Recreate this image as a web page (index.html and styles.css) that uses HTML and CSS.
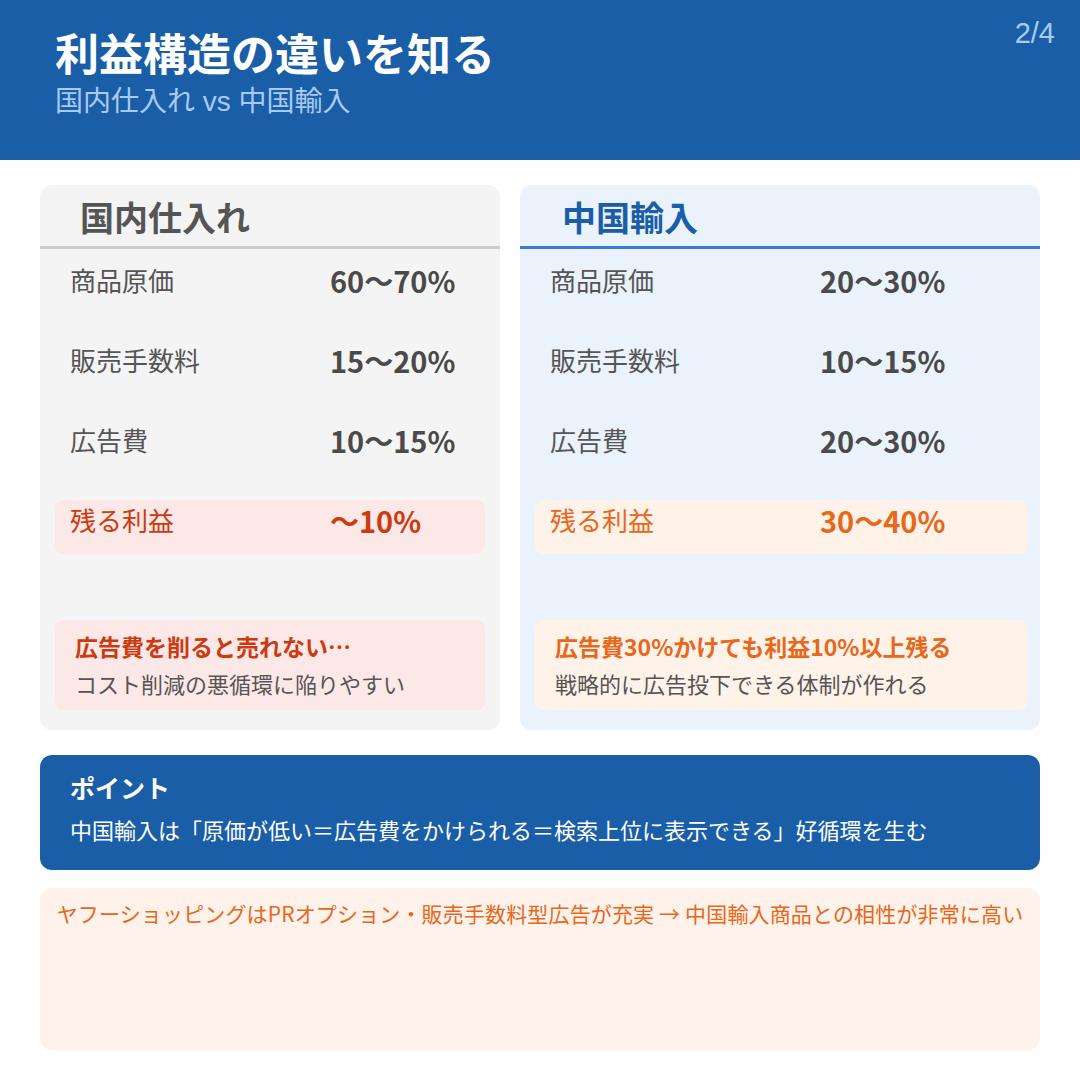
FILE: index.html
```html
<!DOCTYPE html>
<html lang="ja">
<head>
<meta charset="utf-8">
<link rel="stylesheet" href="styles.css">
</head>
<body>
<div class="page">
  <header class="header">
    <h1 class="title">利益構造の違いを知る</h1>
    <p class="subtitle">国内仕入れ vs 中国輸入</p>
    <span class="pager">2/4</span>
  </header>

  <main class="main">
    <section class="compare">
      <div class="card card-domestic">
        <h2 class="card-title">国内仕入れ</h2>
        <div class="rows">
          <div class="row"><span class="label">商品原価</span><span class="value">60〜70%</span></div>
          <div class="row"><span class="label">販売手数料</span><span class="value">15〜20%</span></div>
          <div class="row"><span class="label">広告費</span><span class="value">10〜15%</span></div>
          <div class="row profit"><span class="label">残る利益</span><span class="value">〜10%</span></div>
        </div>
        <div class="note">
          <p class="note-head">広告費を削ると売れない…</p>
          <p class="note-body">コスト削減の悪循環に陥りやすい</p>
        </div>
      </div>

      <div class="card card-china">
        <h2 class="card-title">中国輸入</h2>
        <div class="rows">
          <div class="row"><span class="label">商品原価</span><span class="value">20〜30%</span></div>
          <div class="row"><span class="label">販売手数料</span><span class="value">10〜15%</span></div>
          <div class="row"><span class="label">広告費</span><span class="value">20〜30%</span></div>
          <div class="row profit"><span class="label">残る利益</span><span class="value">30〜40%</span></div>
        </div>
        <div class="note">
          <p class="note-head">広告費30%かけても利益10%以上残る</p>
          <p class="note-body">戦略的に広告投下できる体制が作れる</p>
        </div>
      </div>
    </section>

    <section class="point">
      <h3 class="point-title">ポイント</h3>
      <p class="point-text">中国輸入は「原価が低い＝広告費をかけられる＝検索上位に表示できる」好循環を生む</p>
    </section>

    <section class="footnote">
      <p>ヤフーショッピングはPRオプション・販売手数料型広告が充実 → 中国輸入商品との相性が非常に高い</p>
    </section>
  </main>
</div>
</body>
</html>
```

FILE: styles.css
```css
* { box-sizing: border-box; margin: 0; padding: 0; }

html, body {
  width: 1080px;
  height: 1080px;
  background: #ffffff;
  font-family: "Noto Sans CJK JP", "Noto Sans", sans-serif;
  overflow: hidden;
}

.page {
  width: 1080px;
  height: 1080px;
  display: flex;
  flex-direction: column;
}

/* Header */
.header {
  position: relative;
  height: 160px;
  background: #1b5ea8;
  padding: 26px 55px 0;
}

.title {
  font-size: 44px;
  font-weight: 700;
  line-height: 53px;
  color: #ffffff;
}

.subtitle {
  margin-top: 5px;
  font-family: "Liberation Sans", "Noto Sans CJK JP", sans-serif;
  font-size: 28px;
  line-height: 36px;
  color: #a9cbf2;
}

.pager {
  position: absolute;
  top: 16px;
  right: 25px;
  font-family: "Liberation Sans", "Noto Sans CJK JP", sans-serif;
  font-size: 29px;
  line-height: 34px;
  color: #a9cbf2;
}

/* Main */
.main {
  flex: 1;
  padding: 25px 40px 30px;
  display: flex;
  flex-direction: column;
}

.compare {
  display: flex;
  gap: 20px;
  height: 545px;
}

.card {
  border-radius: 12px;
  display: flex;
  flex-direction: column;
  padding-bottom: 20px;
}

.card-domestic { width: 460px; background: #f4f4f4; }
.card-china { width: 520px; background: #eaf2fc; }

.card-title {
  height: 64px;
  padding: 11px 40px 0;
  font-size: 34px;
  line-height: 42px;
  font-weight: 700;
  border-bottom: 3px solid #cccccc;
}

.card-domestic .card-title { color: #555555; }
.card-china .card-title { color: #1b5ea8; border-bottom-color: #3a7bd5; padding-left: 42px; }

.rows {
  padding: 11px 15px 0;
}

.row {
  display: flex;
  align-items: center;
  height: 40px;
  margin-bottom: 40px;
  padding-left: 15px;
}

.row:last-child { margin-bottom: 0; }

.label {
  font-size: 26px;
  line-height: 40px;
  color: #555555;
}

.card-domestic .label { width: 260px; }
.card-china .label { width: 270px; }

.value {
  font-size: 29px;
  font-weight: 700;
  line-height: 40px;
  color: #4a4a4a;
}

.row.profit {
  height: 54px;
  margin-top: 2px;
  align-items: flex-start;
  border-radius: 8px;
}

.card-domestic .profit { background: #fde8e8; }
.card-china .profit { background: #fff2e9; margin-right: -2px; }

.card-domestic .profit .label,
.card-domestic .profit .value { color: #cc3a10; }
.card-china .profit .label,
.card-china .profit .value { color: #e8671a; }

.note {
  margin: auto 15px 0;
  padding: 11px 20px;
  border-radius: 8px;
}

.card-domestic .note { background: #fde8e8; }
.card-china .note { background: #fff2e9; margin-right: 13px; }

.note-head {
  font-size: 23px;
  font-weight: 700;
  line-height: 31px;
}

.card-domestic .note-head { color: #cc3a10; }
.card-china .note-head { color: #e8671a; }

.note-body {
  margin-top: 6px;
  font-size: 22px;
  line-height: 31px;
  color: #555555;
}

/* Point */
.point {
  margin-top: 25px;
  height: 115px;
  background: #1b5ea8;
  border-radius: 12px;
  padding: 15px 30px 0;
  color: #ffffff;
}

.point-title {
  font-size: 25px;
  font-weight: 700;
  line-height: 34px;
}

.point-text {
  margin-top: 10px;
  font-size: 22px;
  line-height: 31px;
}

/* Footnote */
.footnote {
  margin-top: 18px;
  height: 162px;
  background: #fff2ea;
  border-radius: 12px;
  padding-top: 10px;
  text-align: center;
  color: #e8671a;
  font-size: 21px;
  line-height: 30px;
  letter-spacing: 0.15px;
}
```
